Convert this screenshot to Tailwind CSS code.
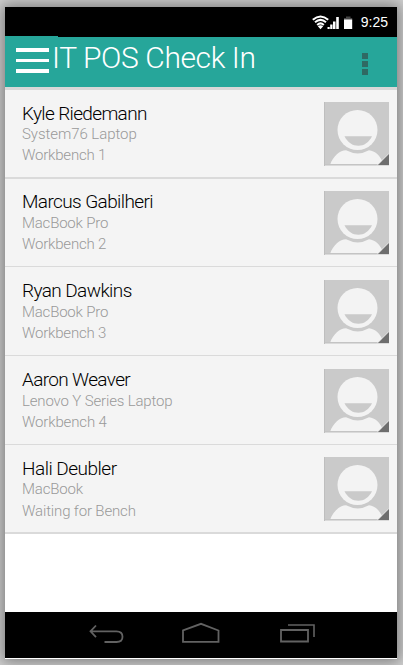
<!DOCTYPE html>
<html lang="en">
<head>
<meta charset="utf-8">
<title>IT POS Check In</title>
<script src="https://cdn.jsdelivr.net/npm/@tailwindcss/browser@4"></script>
</head>
<body class="w-[403px] h-[665px] overflow-hidden bg-[#d2d2d2] pl-[5px] pt-[7px] font-[Roboto,sans-serif]">
<svg class="hidden">
  <symbol id="avatar" viewBox="0 0 65 64">
    <rect width="65" height="64" fill="#cacaca"/>
    <path d="M6 63C9 54 16 48.500 22 48.300Q34 54.500 45 48.300C51 49 56 53 60 63Z" fill="#f3f3f3"/>
    <circle cx="33.500" cy="28" r="20" fill="#f3f3f3"/>
    <path d="M20.500 34.300H48C45 40.500 40 43.800 34.300 43.800S23.500 40.500 20.500 34.300Z" fill="#cacaca"/>
    <path d="M0 62.500H65" stroke="#c4c4c4"/>
    <path d="M0 63.500H65" stroke="#dadada"/>
    <path d="M.5 0V64" stroke="#bebebe"/>
    <path d="M53 63.500L65 51.500" stroke="#e6e6e6" stroke-width="1"/>
    <path d="M54 63L65 52V63Z" fill="#6e6e6e"/>
  </symbol>
</svg>
<div class="w-[392px] h-[652px] flex flex-col bg-white shadow-[0_0_14px_3px_#7c7c7c]">
  <div class="h-[30px] shrink-0 bg-black flex items-center justify-end pr-[9px] text-white">
    <svg class="w-[42px] h-[30px] mr-[7px]" viewBox="0 0 42 30">
      <g fill="none" stroke="#fff" stroke-width="2">
        <path d="M.8 12.800Q8.500 6.200 16.200 12.800"/>
        <path d="M3 15.300Q8.500 10.400 14 15.300"/>
        <path d="M5.200 17.900Q8.500 14.800 11.800 17.900"/>
      </g>
      <path d="M5.800 19.300Q8.500 17.300 11.200 19.300L8.500 22.200Z" fill="#fff"/>
      <path d="M15.500 20h2.200v2h-2.200zM18.200 17.500h2.300v4.500h-2.300zM21 14.500h2.500v7.500h-2.500zM24.200 10h2.600v12h-2.600z" fill="#fff"/>
      <path d="M34 9.500h4.500v1.500h1.700v2.500h-8.200v-2.500h2z" fill="#444"/>
      <path d="M32 12.500h8.200v9.500h-8.200z" fill="#fff"/>
    </svg>
    <span class="font-['Liberation_Sans',sans-serif] text-[14px] leading-[30px]">9:25</span>
  </div>
  <div class="relative h-[50px] shrink-0 bg-[#26a69a] flex pl-[11px]">
    <i class="absolute left-0 -top-px w-[53px] h-px bg-[#26a69a]"></i>
    <div class="w-[33px] pt-[11px] flex flex-col gap-[7px]">
      <i class="h-[4px] bg-white"></i>
      <i class="h-[3px] bg-white"></i>
      <i class="h-[4px] bg-white"></i>
    </div>
    <h1 class="pl-[3px] pt-[3px] text-[30px] leading-[36px] font-light tracking-[-0.4px] text-white whitespace-nowrap">IT POS Check In</h1>
    <div class="ml-auto mr-[29px] pt-[16px] flex flex-col gap-[2px]">
      <i class="size-[6px] bg-[#2f6963]"></i>
      <i class="size-[6px] bg-[#2f6963]"></i>
      <i class="size-[6px] bg-[#2f6963]"></i>
    </div>
  </div>
  <ul class="border-t-[3px] border-[#d8d8d8] shrink-0">
    <li class="h-[89px] bg-[#f4f4f4] border-b-2 border-[#dadada] flex justify-between pl-[17px] pr-[8px] pt-[12px]">
      <div class="whitespace-nowrap font-light text-[15px] leading-[21px] tracking-[-0.2px] text-[#999]">
        <p class="h-[22px] leading-[24px] text-[19px] tracking-[-0.65px] text-black">Kyle Riedemann</p>
        <p class="tracking-[-0.05px]">System76 Laptop</p>
        <p>Workbench 1</p>
      </div>
      <svg class="w-[65px] h-[64px]"><use href="#avatar"/></svg>
    </li>
    <li class="h-[88px] bg-[#f4f4f4] border-b border-[#dadada] flex justify-between pl-[17px] pr-[8px] pt-[12px]">
      <div class="whitespace-nowrap font-light text-[15px] leading-[21px] tracking-[-0.2px] text-[#999]">
        <p class="h-[23px] -mt-px leading-[24px] text-[19px] tracking-[-0.6px] text-black">Marcus Gabilheri</p>
        <p>MacBook Pro</p>
        <p>Workbench 2</p>
      </div>
      <svg class="w-[65px] h-[64px]"><use href="#avatar"/></svg>
    </li>
    <li class="h-[89px] bg-[#f4f4f4] border-b border-[#dadada] flex justify-between pl-[17px] pr-[8px] pt-[13px]">
      <div class="whitespace-nowrap font-light text-[15px] leading-[21px] tracking-[-0.2px] text-[#999]">
        <p class="h-[23px] -mt-px leading-[24px] text-[19px] tracking-[-0.6px] text-black">Ryan Dawkins</p>
        <p>MacBook Pro</p>
        <p>Workbench 3</p>
      </div>
      <svg class="w-[65px] h-[64px]"><use href="#avatar"/></svg>
    </li>
    <li class="h-[89px] bg-[#f4f4f4] border-b border-[#dadada] flex justify-between pl-[17px] pr-[8px] pt-[13px]">
      <div class="whitespace-nowrap font-light text-[15px] leading-[21px] tracking-[-0.15px] text-[#999]">
        <p class="h-[23px] -mt-px leading-[24px] text-[19px] tracking-[-0.65px] text-black">Aaron Weaver</p>
        <p>Lenovo Y Series Laptop</p>
        <p>Workbench 4</p>
      </div>
      <svg class="w-[65px] h-[64px]"><use href="#avatar"/></svg>
    </li>
    <li class="h-[89px] bg-[#f4f4f4] border-b-2 border-[#dadada] flex justify-between pl-[17px] pr-[8px] pt-[12px]">
      <div class="whitespace-nowrap font-light text-[15px] leading-[21px] tracking-[-0.15px] text-[#999]">
        <p class="h-[22px] leading-[24px] text-[19px] tracking-[-0.5px] text-black">Hali Deubler</p>
        <p>MacBook</p>
        <p class="pt-px">Waiting for Bench</p>
      </div>
      <svg class="w-[65px] h-[64px]"><use href="#avatar"/></svg>
    </li>
  </ul>
  <div class="h-[46px] mt-auto mb-px shrink-0 bg-black">
    <svg class="w-[392px] h-[46px]" viewBox="0.5 0 392 46" fill="none" stroke="#626262" stroke-width="1.800">
      <path d="M91.500 13.500L86 19.300L91.500 25.200M86 19.300H112C116 19.300 118 21.500 118 24.700S116 30 112 30H100"/>
      <path d="M178.500 29.800V18.500L196.500 11.800L214 18.500V29.800Z"/>
      <path d="M276.500 18H303.500V29.500H276.500Z"/>
      <path d="M283.500 13H309.500V25" stroke-width="1.600"/>
    </svg>
  </div>
</div>
</body>
</html>
